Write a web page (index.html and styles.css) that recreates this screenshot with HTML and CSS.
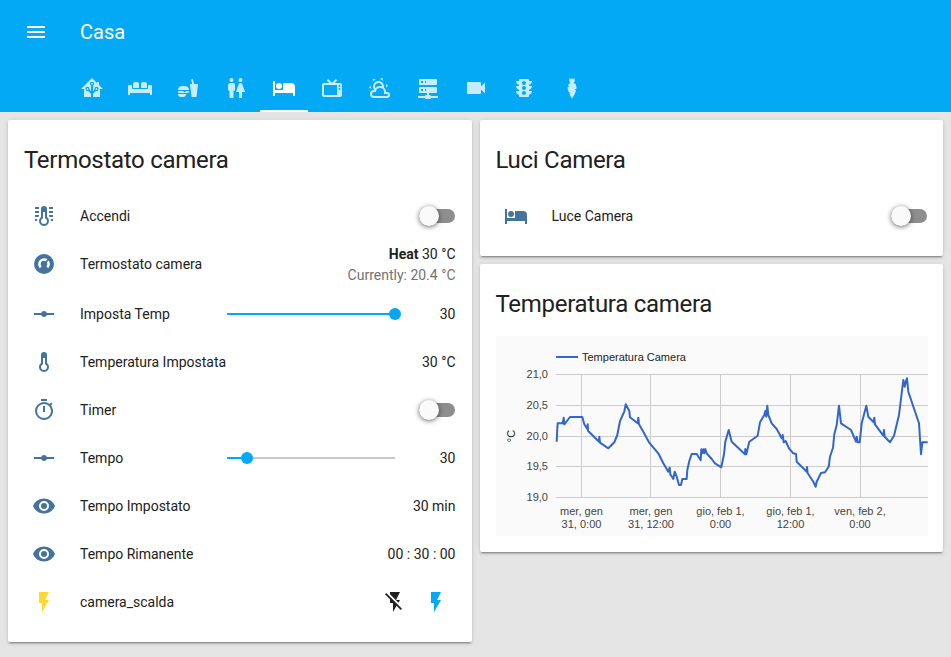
FILE: index.html
```html
<!DOCTYPE html>
<html lang="it">
<head>
<meta charset="utf-8">
<title>Casa</title>
<link rel="stylesheet" href="styles.css">
</head>
<body>
<header class="app-header">
  <div class="toolbar">
    <button class="icon-btn menu-btn"><svg class="icon" viewBox="0 0 24 24"><path d="M3,6H21V8H3V6M3,11H21V13H3V11M3,16H21V18H3V16Z"/></svg></button>
    <div class="app-title">Casa</div>
  </div>
  <nav class="tabs">
    <a class="tab"><svg class="icon" viewBox="0 0 24 24"><path d="M21.8,13H20V21H13V17.67L15.79,14.88L16.5,15C17.66,15 18.6,14.06 18.6,12.9C18.6,11.74 17.66,10.8 16.5,10.8A2.1,2.1 0 0,0 14.4,12.9L14.5,13.61L13,15.13V9.65C13.66,9.29 14.1,8.6 14.1,7.8A2.1,2.1 0 0,0 12,5.7A2.1,2.1 0 0,0 9.9,7.8C9.9,8.6 10.34,9.29 11,9.65V15.13L9.5,13.61L9.6,12.9A2.1,2.1 0 0,0 7.5,10.8A2.1,2.1 0 0,0 5.4,12.9A2.1,2.1 0 0,0 7.5,15L8.21,14.88L11,17.67V21H4V13H2.25C1.83,13 1.42,13 1.42,12.79C1.43,12.57 1.85,12.15 2.28,11.72L11,3C11.33,2.67 11.67,2.33 12,2.33C12.33,2.33 12.67,2.67 13,3L17,7V6H19V9L21.78,11.78C22.18,12.18 22.59,12.59 22.6,12.8C22.6,13 22.2,13 21.8,13M7.5,12A0.9,0.9 0 0,1 8.4,12.9A0.9,0.9 0 0,1 7.5,13.8A0.9,0.9 0 0,1 6.6,12.9A0.9,0.9 0 0,1 7.5,12M16.5,12C17,12 17.4,12.4 17.4,12.9C17.4,13.4 17,13.8 16.5,13.8A0.9,0.9 0 0,1 15.6,12.9A0.9,0.9 0 0,1 16.5,12M12,6.9C12.5,6.9 12.9,7.3 12.9,7.8C12.9,8.3 12.5,8.7 12,8.7C11.5,8.7 11.1,8.3 11.1,7.8C11.1,7.3 11.5,6.9 12,6.9Z"/></svg></a>
    <a class="tab"><svg class="icon" viewBox="0 0 24 24"><path d="M7,6H9A2,2 0 0,1 11,8V12H5V8A2,2 0 0,1 7,6M15,6H17A2,2 0 0,1 19,8V12H13V8A2,2 0 0,1 15,6M1,9H3A1,1 0 0,1 4,10V12A1,1 0 0,0 5,13H19A1,1 0 0,0 20,12V10A1,1 0 0,1 21,9H23A1,1 0 0,1 24,10V19H22V17H2V19H0V10A1,1 0 0,1 1,9Z"/></svg></a>
    <a class="tab"><svg class="icon" viewBox="0 0 24 24"><path d="M15.5,21L14,8H16.23L15.1,3.46L16.84,3L18.09,8H22L20.5,21H15.5M2,14C2,11.5 4,10 6,10H9C11,10 13,11.5 13,14H2M10,18A3,3 0 0,1 7,21H5A3,3 0 0,1 2,18H10M3,15H7L8.5,16.5L10,15H12A1,1 0 0,1 13,16A1,1 0 0,1 12,17H3A1,1 0 0,1 2,16A1,1 0 0,1 3,15Z"/></svg></a>
    <a class="tab"><svg class="icon" viewBox="0 0 24 24"><path d="M7.5,2A2,2 0 0,1 9.5,4A2,2 0 0,1 7.5,6A2,2 0 0,1 5.5,4A2,2 0 0,1 7.5,2M6,7H9A2,2 0 0,1 11,9V14.5H9.5V22H5.5V14.5H4V9A2,2 0 0,1 6,7M16.5,2A2,2 0 0,1 18.5,4A2,2 0 0,1 16.5,6A2,2 0 0,1 14.5,4A2,2 0 0,1 16.5,2M15,22V16H12L14.59,8.41C14.84,7.59 15.6,7 16.5,7C17.4,7 18.16,7.59 18.41,8.41L21,16H18V22H15Z"/></svg></a>
    <a class="tab tab-active"><svg class="icon" viewBox="0 0 24 24"><path d="M19,7H11V14H3V5H1V20H3V17H21V20H23V11A4,4 0 0,0 19,7M7,13A3,3 0 0,0 10,10A3,3 0 0,0 7,7A3,3 0 0,0 4,10A3,3 0 0,0 7,13Z"/></svg></a>
    <a class="tab"><svg class="icon" viewBox="0 0 24 24"><path d="M8.16,3L6.75,4.41L9.34,7H4C2.89,7 2,7.89 2,9V19C2,20.11 2.89,21 4,21H20C21.11,21 22,20.11 22,19V9C22,7.89 21.11,7 20,7H14.66L17.25,4.41L15.84,3L12,6.84L8.16,3M4,9H17V19H4V9M19.5,9A1,1 0 0,1 20.5,10A1,1 0 0,1 19.5,11A1,1 0 0,1 18.5,10A1,1 0 0,1 19.5,9M19.5,12A1,1 0 0,1 20.5,13A1,1 0 0,1 19.5,14A1,1 0 0,1 18.5,13A1,1 0 0,1 19.5,12Z"/></svg></a>
    <a class="tab"><svg class="icon" viewBox="0 0 24 24"><path d="M12.74,5.47C15.1,6.5 16.35,9.03 15.92,11.46C17.19,12.56 18,14.19 18,16V16.17C18.31,16.06 18.65,16 19,16A3,3 0 0,1 22,19A3,3 0 0,1 19,22H6A4,4 0 0,1 2,18A4,4 0 0,1 6,14H6.27C5,12.45 4.6,10.24 5.5,8.26C6.72,5.5 9.97,4.24 12.74,5.47M11.93,7.3C10.16,6.5 8.09,7.31 7.31,9.07C6.85,10.09 6.93,11.22 7.41,12.13C8.5,10.83 10.16,10 12,10C12.7,10 13.38,10.12 14,10.34C13.94,9.06 13.18,7.86 11.93,7.3M13.55,3.64C13,3.4 12.45,3.23 11.88,3.12L14.37,1.82L15.27,4.71C14.76,4.29 14.19,3.93 13.55,3.64M6.09,4.44C5.6,4.79 5.17,5.19 4.8,5.63L4.91,2.82L7.87,3.5C7.25,3.71 6.65,4.03 6.09,4.44M18,9.71C17.91,9.12 17.78,8.55 17.59,8L19.97,9.5L17.92,11.73C18.03,11.08 18.05,10.4 18,9.71M3.04,11.3C3.11,11.9 3.24,12.47 3.43,13L1.06,11.5L3.1,9.28C3,9.93 2.97,10.61 3.04,11.3M19,18H16V16A4,4 0 0,0 12,12A4,4 0 0,0 8,16H6A2,2 0 0,0 4,18A2,2 0 0,0 6,20H19A1,1 0 0,0 20,19A1,1 0 0,0 19,18Z"/></svg></a>
    <a class="tab"><svg class="icon" viewBox="0 0 24 24"><path d="M13,19H14A1,1 0 0,1 15,20H22V22H15A1,1 0 0,1 14,23H10A1,1 0 0,1 9,22H2V20H9A1,1 0 0,1 10,19H11V17H4A1,1 0 0,1 3,16V12A1,1 0 0,1 4,11H20A1,1 0 0,1 21,12V16A1,1 0 0,1 20,17H13V19M4,3H20A1,1 0 0,1 21,4V8A1,1 0 0,1 20,9H4A1,1 0 0,1 3,8V4A1,1 0 0,1 4,3M9,7H10V5H9V7M9,15H10V13H9V15M5,5V7H7V5H5M5,13V15H7V13H5Z"/></svg></a>
    <a class="tab"><svg class="icon" viewBox="0 0 24 24"><path d="M17,10.5V7A1,1 0 0,0 16,6H4A1,1 0 0,0 3,7V17A1,1 0 0,0 4,18H16A1,1 0 0,0 17,17V13.5L21,17.5V6.5L17,10.5Z"/></svg></a>
    <a class="tab"><svg class="icon" viewBox="0 0 24 24"><path d="M12,9A2,2 0 0,1 10,7C10,5.89 10.9,5 12,5C13.11,5 14,5.89 14,7A2,2 0 0,1 12,9M12,14A2,2 0 0,1 10,12C10,10.89 10.9,10 12,10C13.11,10 14,10.89 14,12A2,2 0 0,1 12,14M12,19A2,2 0 0,1 10,17C10,15.89 10.9,15 12,15C13.11,15 14,15.89 14,17A2,2 0 0,1 12,19M20,10H17V8.86C18.72,8.41 20,6.86 20,5H17V4A1,1 0 0,0 16,3H8A1,1 0 0,0 7,4V5H4C4,6.86 5.28,8.41 7,8.86V10H4C4,11.86 5.28,13.41 7,13.86V15H4C4,16.86 5.28,18.41 7,18.86V20A1,1 0 0,0 8,21H16A1,1 0 0,0 17,20V18.86C18.72,18.41 20,16.86 20,15H17V13.86C18.72,13.41 20,11.86 20,10Z"/></svg></a>
    <a class="tab"><svg class="icon" viewBox="0 0 24 24"><path d="M9.5,2L11,3.2L12,2L13,3.2L14.5,2L14.8,5.5L13.5,7L15.7,8L16.5,11L16.3,13L14.4,13.6L16,14.3L15.2,17L13.6,20L12,22.5L10.4,20L9.4,17.5L10.8,17L8.8,16.3L7.7,13L7.7,11L10,10.5L8,9.7L8.8,8L10.5,7L9.2,5.5Z"/></svg></a>
  </nav>
</header>

<main class="columns">
  <div class="column">
    <section class="card">
      <h2 class="card-title">Termostato camera</h2>
      <div class="rows">
        <div class="row">
          <span class="badge"><svg class="icon" viewBox="0 0 24 24"><path d="M17,3H21V5H17V3M17,7H21V9H17V7M17,11H21V13H17.75L17,12.1V11M21,15V17H19C19,16.31 18.9,15.63 18.71,15H21M7,3V5H3V3H7M7,7V9H3V7H7M7,11V12.1L6.25,13H3V11H7M3,15H5.29C5.1,15.63 5,16.31 5,17H3V15M15,13V5A3,3 0 0,0 12,2A3,3 0 0,0 9,5V13C6.79,14.66 6.34,17.79 8,20C9.66,22.21 12.79,22.66 15,21C17.21,19.34 17.66,16.21 16,14C15.72,13.62 15.38,13.28 15,13M11,8V14.17C9.83,14.58 9,15.69 9,17A3,3 0 0,0 12,20A3,3 0 0,0 15,17C15,15.69 14.17,14.58 13,14.17V8H11Z" fill-rule="evenodd"/></svg></span>
          <span class="name">Accendi</span>
          <span class="switch"><span class="switch-thumb"></span></span>
        </div>
        <div class="row row-climate">
          <span class="badge"><svg class="icon" viewBox="-2.4 -2.4 28.8 28.8"><path d="M16.95,16.95L14.83,14.83C15.55,14.1 16,13.1 16,12C16,11.26 15.79,10.57 15.43,10L17.6,7.81C18.5,9.04 19,10.46 19,12C19,13.93 18.22,15.68 16.95,16.95M12,5C13.54,5 14.96,5.5 16.19,6.4L14,8.57C13.43,8.21 12.74,8 12,8A4,4 0 0,0 8,12C8,13.1 8.45,14.1 9.17,14.83L7.05,16.95C5.78,15.68 5,13.93 5,12A7,7 0 0,1 12,5M12,0A12,12 0 0,0 0,12A12,12 0 0,0 12,24A12,12 0 0,0 24,12A12,12 0 0,0 12,0Z"/></svg></span>
          <span class="name">Termostato camera</span>
          <div class="climate-state">
            <div><b class="climate-mode">Heat</b> 30 °C</div>
            <div class="climate-current">Currently: 20.4 °C</div>
          </div>
        </div>
        <div class="row">
          <span class="badge"><svg class="icon" viewBox="0 0 24 24"><path d="M2 11H9.17C9.58 9.83 10.69 9 12 9S14.42 9.83 14.83 11H22V13H14.83C14.42 14.17 13.31 15 12 15S9.58 14.17 9.17 13H2V11Z"/></svg></span>
          <span class="name name-slider">Imposta Temp</span>
          <span class="slider"><span class="slider-fill" style="width:100%"><span class="slider-thumb"></span></span></span>
          <span class="value">30</span>
        </div>
        <div class="row">
          <span class="badge"><svg class="icon" viewBox="0 0 24 24"><path d="M17,17A5,5 0 0,1 12,22A5,5 0 0,1 7,17C7,15.36 7.79,13.91 9,13V5A3,3 0 0,1 12,2A3,3 0 0,1 15,5V13C16.21,13.91 17,15.36 17,17M11,8V14.17C9.83,14.58 9,15.69 9,17A3,3 0 0,0 12,20A3,3 0 0,0 15,17C15,15.69 14.17,14.58 13,14.17V8H11Z"/></svg></span>
          <span class="name">Temperatura Impostata</span>
          <span class="value">30 °C</span>
        </div>
        <div class="row">
          <span class="badge"><svg class="icon" viewBox="0 0 24 24"><path d="M12,20A7,7 0 0,1 5,13A7,7 0 0,1 12,6A7,7 0 0,1 19,13A7,7 0 0,1 12,20M19.03,7.39L20.45,5.97C20,5.46 19.55,5 19.04,4.56L17.62,6C16.07,4.74 14.12,4 12,4A9,9 0 0,0 3,13A9,9 0 0,0 12,22C17,22 21,17.97 21,13C21,10.88 20.26,8.93 19.03,7.39M11,14H13V8H11M15,1H9V3H15V1Z"/></svg></span>
          <span class="name">Timer</span>
          <span class="switch"><span class="switch-thumb"></span></span>
        </div>
        <div class="row">
          <span class="badge"><svg class="icon" viewBox="0 0 24 24"><path d="M2 11H9.17C9.58 9.83 10.69 9 12 9S14.42 9.83 14.83 11H22V13H14.83C14.42 14.17 13.31 15 12 15S9.58 14.17 9.17 13H2V11Z"/></svg></span>
          <span class="name name-slider">Tempo</span>
          <span class="slider"><span class="slider-fill" style="width:11.9%"><span class="slider-thumb"></span></span></span>
          <span class="value">30</span>
        </div>
        <div class="row">
          <span class="badge"><svg class="icon" viewBox="0 0 24 24"><path d="M12,9A3,3 0 0,0 9,12A3,3 0 0,0 12,15A3,3 0 0,0 15,12A3,3 0 0,0 12,9M12,17A5,5 0 0,1 7,12A5,5 0 0,1 12,7A5,5 0 0,1 17,12A5,5 0 0,1 12,17M12,4.5C7,4.5 2.73,7.61 1,12C2.73,16.39 7,19.5 12,19.5C17,19.5 21.27,16.39 23,12C21.27,7.61 17,4.5 12,4.5Z"/></svg></span>
          <span class="name">Tempo Impostato</span>
          <span class="value">30 min</span>
        </div>
        <div class="row">
          <span class="badge"><svg class="icon" viewBox="0 0 24 24"><path d="M12,9A3,3 0 0,0 9,12A3,3 0 0,0 12,15A3,3 0 0,0 15,12A3,3 0 0,0 12,9M12,17A5,5 0 0,1 7,12A5,5 0 0,1 12,7A5,5 0 0,1 17,12A5,5 0 0,1 12,17M12,4.5C7,4.5 2.73,7.61 1,12C2.73,16.39 7,19.5 12,19.5C17,19.5 21.27,16.39 23,12C21.27,7.61 17,4.5 12,4.5Z"/></svg></span>
          <span class="name">Tempo Rimanente</span>
          <span class="value">00 : 30 : 00</span>
        </div>
        <div class="row">
          <span class="badge badge-on"><svg class="icon" viewBox="0 0 24 24"><path d="M7,2V13H10V22L17,10H13L17,2H7Z"/></svg></span>
          <span class="name">camera_scalda</span>
          <span class="actions">
            <button class="icon-btn action-off"><svg class="icon" viewBox="0 0 24 24"><path d="M17,10H13L17,2H7V4.18L15.46,12.64M3.27,3L2,4.27L7,9.27V13H10V22L13.58,15.86L17.73,20L19,18.73L3.27,3Z"/></svg></button>
            <button class="icon-btn action-on"><svg class="icon" viewBox="0 0 24 24"><path d="M7,2V13H10V22L17,10H13L17,2H7Z"/></svg></button>
          </span>
        </div>
      </div>
    </section>
  </div>

  <div class="column">
    <section class="card">
      <h2 class="card-title">Luci Camera</h2>
      <div class="rows">
        <div class="row">
          <span class="badge"><svg class="icon" viewBox="0 0 24 24"><path d="M19,7H11V14H3V5H1V20H3V17H21V20H23V11A4,4 0 0,0 19,7M7,13A3,3 0 0,0 10,10A3,3 0 0,0 7,7A3,3 0 0,0 4,10A3,3 0 0,0 7,13Z"/></svg></span>
          <span class="name">Luce Camera</span>
          <span class="switch"><span class="switch-thumb"></span></span>
        </div>
      </div>
    </section>
    <section class="card">
      <h2 class="card-title">Temperatura camera</h2>
      <div class="chart-wrap">
        <svg class="chart" viewBox="496 336 432 200" width="432" height="200">
          <rect class="chart-bg" x="496" y="336" width="432" height="200"/>
          <g class="grid">
            <line x1="556" y1="374.5" x2="928" y2="374.5"/>
            <line x1="556" y1="405.5" x2="928" y2="405.5"/>
            <line x1="556" y1="436.5" x2="928" y2="436.5"/>
            <line x1="556" y1="466.5" x2="928" y2="466.5"/>
            <line x1="556" y1="497.5" x2="928" y2="497.5"/>
            <line x1="581.5" y1="374" x2="581.5" y2="497"/>
            <line x1="650.5" y1="374" x2="650.5" y2="497"/>
            <line x1="720.5" y1="374" x2="720.5" y2="497"/>
            <line x1="790.5" y1="374" x2="790.5" y2="497"/>
            <line x1="860.5" y1="374" x2="860.5" y2="497"/>
          </g>
          <line class="series" x1="556" y1="357" x2="578" y2="357"/>
          <text class="legend" x="582" y="361">Temperatura Camera</text>
          <g class="ylabels">
            <text x="548" y="378">21,0</text>
            <text x="548" y="409">20,5</text>
            <text x="548" y="440">20,0</text>
            <text x="548" y="470">19,5</text>
            <text x="548" y="501">19,0</text>
          </g>
          <text class="ytitle" transform="translate(515 436) rotate(-90)">°C</text>
          <g class="xlabels">
            <text x="581.5" y="515">mer, gen</text><text x="581.5" y="528">31, 0:00</text>
            <text x="651" y="515">mer, gen</text><text x="651" y="528">31, 12:00</text>
            <text x="720.5" y="515">gio, feb 1,</text><text x="720.5" y="528">0:00</text>
            <text x="790.5" y="515">gio, feb 1,</text><text x="790.5" y="528">12:00</text>
            <text x="860" y="515">ven, feb 2,</text><text x="860" y="528">0:00</text>
          </g>
          <polyline class="series" points="556.7,441.7 557.3,428.3 557.7,423.3 562.7,423.3 563.7,417.7 564.3,424.3 570,417 582.3,417 584.3,424.3 587.3,429 587.7,424.3 588,430.7 599,441.7 599.3,436.7 600,442.7 608.3,448.3 614.3,442.3 617.3,435 620,421 624.3,411.7 625.7,404.3 629.3,411 630,417.3 637.7,423.3 638.3,417.7 639,424.3 643.3,431.7 649,442.3 658.3,453.3 663.3,463.3 668.3,471.7 669.7,467.7 670.3,474.3 673.3,479 674.7,471.7 676.7,476.7 679,485 681,485 682.3,479 686.7,479 687.3,470 689.3,461 691.7,454 696.7,454 700.7,460.3 701.3,449.3 702.3,453.3 703.3,449.3 704.3,453.3 705.3,449 706.7,453.3 711.7,459 715,463.3 721.3,467.3 724,454.3 725.3,441.7 728.7,430 731.7,441.7 745,454.3 745.3,449 746.3,454.3 749.3,441.7 757.7,435.7 760,422.3 764.3,415 765.3,411 766.3,416.7 767.3,405.7 768.3,415 771.7,423.3 776.7,429 781.7,438.3 782.7,435 783.7,442.3 785.7,441 789,448.3 793.3,453.3 796,454 796.7,461.7 805,470 806.7,471.7 807,467 807.7,473.3 811,478.3 813.3,481.7 815.7,486.7 816.7,481.7 821,473 825,472.3 828.7,466.7 830,456.7 833,447.7 834.3,434.3 836.7,425 839,405.7 841,423.3 851,430 856,441.7 856.7,436.7 857.7,442.3 859.7,442.3 861.7,423.3 866.3,405.7 868.3,416.7 873.7,422.3 874.3,417.7 875,424.3 883.3,435.7 884,430 884.7,436.7 890,442.3 894,435.7 899,415 903.3,380 904.7,386.7 905.7,381.7 907,378.3 908.3,391.7 919,423.3 921,454.3 922.3,442.3 927.7,442.3"/>
        </svg>
      </div>
    </section>
  </div>
</main>
</body>
</html>
```

FILE: styles.css
```css
* { box-sizing: border-box; }

html, body {
  margin: 0;
  height: 100%;
}

body {
  background: #e5e5e5;
  color: #212121;
  font-family: Roboto, "Noto Sans", sans-serif;
  font-size: 14px;
  line-height: 20px;
  overflow: hidden;
}

.icon {
  display: block;
  width: 24px;
  height: 24px;
  fill: currentColor;
}

.icon-btn {
  display: flex;
  align-items: center;
  justify-content: center;
  width: 40px;
  height: 40px;
  padding: 0;
  border: 0;
  background: none;
  color: inherit;
}

/* Header */
.app-header {
  background: #03a9f4;
  color: #fff;
}

.toolbar {
  display: flex;
  align-items: center;
  height: 64px;
  padding: 0 16px;
}

.app-title {
  margin-left: 24px;
  font-size: 20px;
  font-weight: 400;
  line-height: 28px;
}

.tabs {
  display: flex;
  height: 48px;
  padding-left: 68px;
}

.tab {
  display: flex;
  align-items: center;
  justify-content: center;
  width: 48px;
  color: rgba(255, 255, 255, 0.78);
  border-bottom: 2px solid transparent;
  padding-top: 2px;
}

.tab-active {
  color: #fff;
  border-bottom-color: #fff;
}

/* Cards */
.columns {
  display: grid;
  grid-template-columns: repeat(2, minmax(0, 1fr));
  gap: 8px;
  padding: 8px;
  align-items: start;
}

.column {
  display: flex;
  flex-direction: column;
  gap: 8px;
  min-width: 0;
}

.card {
  background: #fff;
  border-radius: 2px;
  padding-bottom: 16px;
  box-shadow: 0 2px 2px 0 rgba(0, 0, 0, 0.14), 0 1px 5px 0 rgba(0, 0, 0, 0.12), 0 3px 1px -2px rgba(0, 0, 0, 0.2);
}

.card-title {
  margin: 0;
  padding: 24px 16px 16px;
  font-size: 24px;
  font-weight: 400;
  line-height: 32px;
  letter-spacing: -0.012em;
  color: #212121;
}

.rows {
  padding: 0 16px;
}

.row {
  display: flex;
  align-items: center;
  height: 48px;
}

.row-climate {
  height: 50px;
  padding-bottom: 2px;
}

.badge {
  display: flex;
  flex: none;
  align-items: center;
  justify-content: center;
  width: 40px;
  height: 40px;
  color: #44739e;
}

.badge-on {
  color: #fdd835;
}

.name {
  flex: 1;
  margin-left: 16px;
  white-space: nowrap;
}

.name-slider {
  flex: none;
  width: 147px;
}

.value {
  margin-left: auto;
  text-align: right;
  white-space: nowrap;
}

/* Switch */
.switch {
  position: relative;
  display: block;
  flex: none;
  width: 36px;
  height: 14px;
  margin-right: 0.5px;
  border-radius: 7px;
  background: #8e8e8e;
}

.switch-thumb {
  position: absolute;
  top: -3px;
  left: 0;
  width: 20px;
  height: 20px;
  border-radius: 50%;
  background: #fafafa;
  box-shadow: 0 1px 5px 0 rgba(0, 0, 0, 0.6);
}

/* Climate */
.climate-state {
  margin-top: 2px;
  text-align: right;
  white-space: nowrap;
}

.climate-state > div {
  line-height: 21px;
}

.climate-mode {
  font-weight: 700;
}

.climate-current {
  color: #727272;
}

/* Slider */
.slider {
  display: block;
  flex: none;
  width: 168px;
  height: 2px;
  background: #c8c8c8;
}

.slider-fill {
  position: relative;
  display: block;
  height: 2px;
  background: #03a9f4;
}

.slider-thumb {
  position: absolute;
  top: -5px;
  right: -6px;
  width: 12px;
  height: 12px;
  border-radius: 50%;
  background: #03a9f4;
}

/* Actions */
.actions {
  display: flex;
  gap: 1px;
}

.action-off {
  color: #212121;
}

.action-on {
  color: #03a9f4;
}

/* Chart */
.chart-wrap {
  padding: 0 16px 0 16.5px;
  overflow: hidden;
}

.chart {
  display: block;
}

.chart-bg {
  fill: #fafafa;
}

.grid line {
  stroke: #cccccc;
  stroke-width: 1;
}

.series {
  fill: none;
  stroke: #3366cc;
  stroke-width: 2;
  stroke-linejoin: round;
}

.chart text {
  font-family: "Liberation Sans", Arial, sans-serif;
  font-size: 11px;
  fill: #444444;
}

.chart .legend {
  fill: #222222;
}

.ylabels text {
  text-anchor: end;
}

.xlabels text,
.chart .ytitle {
  text-anchor: middle;
}

.chart .ytitle {
  fill: #222222;
}
```
